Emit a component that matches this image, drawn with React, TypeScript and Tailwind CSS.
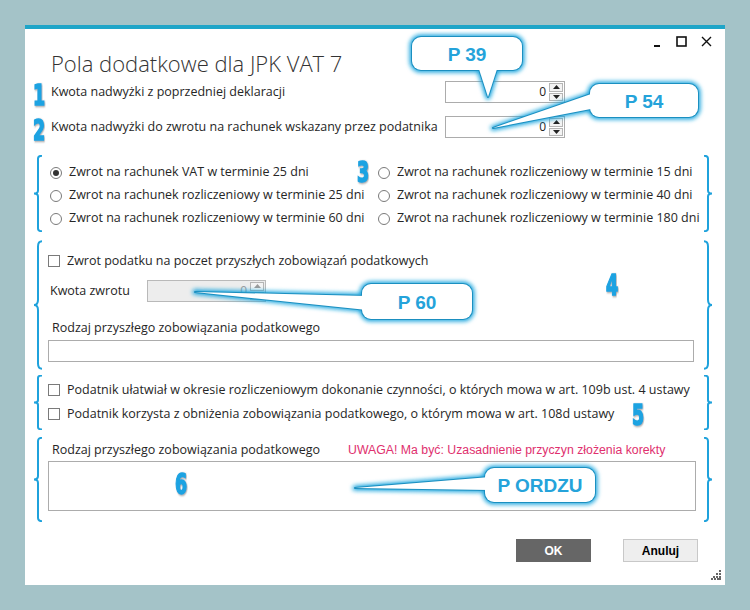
import type { ReactNode } from 'react';

const FONT = { fontFamily: '"Open Sans", "Noto Sans", sans-serif' };
const ARIAL = { fontFamily: '"Liberation Sans", Arial, sans-serif' };
const BLUE = '#1fa2dc';

function Brace({ side }: { side: 'left' | 'right' }) {
  // curly brace drawn to the full height of its group
  const d =
    side === 'left'
      ? 'M9 1 Q5 1 5 5 L5 46 Q5 50 1 50 Q5 50 5 54 L5 95 Q5 99 9 99'
      : 'M1 1 Q5 1 5 5 L5 46 Q5 50 9 50 Q5 50 5 54 L5 95 Q5 99 1 99';
  return (
    <svg
      className={`absolute top-0 h-full w-[10px] ${side === 'left' ? '-left-[15px]' : '-right-[17px]'}`}
      viewBox="0 0 10 100"
      preserveAspectRatio="none"
      aria-hidden="true"
    >
      <path d={d} fill="none" stroke={BLUE} strokeWidth="2" vectorEffect="non-scaling-stroke" />
    </svg>
  );
}

function Group({ children, className = '' }: { children: ReactNode; className?: string }) {
  return (
    <div className={`relative ${className}`}>
      <Brace side="left" />
      <Brace side="right" />
      {children}
    </div>
  );
}

function Spinner({ disabled }: { disabled?: boolean }) {
  const c = disabled ? '#9a9a9a' : '#222';
  return (
    <div className="flex flex-col h-full w-[15px] py-[1px] pr-[1px] gap-[1px]">
      {[0, 1].map((i) => (
        <div key={i} className="flex-1 border border-[#b5b5b5] bg-[#f3f3f3] flex items-center justify-center">
          <svg width="7" height="4" viewBox="0 0 7 4">
            <path d={i === 0 ? 'M0 4 L3.5 0 L7 4Z' : 'M0 0 L3.5 4 L7 0Z'} fill={c} />
          </svg>
        </div>
      ))}
    </div>
  );
}

function NumberBox({ disabled, className = '' }: { disabled?: boolean; className?: string }) {
  return (
    <div
      className={`flex items-stretch border ${disabled ? 'border-[#b9b9b9] bg-[#ededed] text-[#9a9a9a]' : 'border-[#acacac] bg-white text-[#222]'} ${className}`}
    >
      <div className="flex-1 flex items-center justify-end pr-[3px] text-[12px]">0</div>
      <Spinner disabled={disabled} />
    </div>
  );
}

function Radio({ checked, label }: { checked?: boolean; label: string }) {
  return (
    <div className="flex items-center h-[23px] gap-[7px] whitespace-nowrap">
      <span className="w-[12px] h-[12px] shrink-0 rounded-full border border-[#7a7a7a] flex items-center justify-center">
        {checked && <span className="w-[6px] h-[6px] rounded-full bg-[#333]" />}
      </span>
      <span>{label}</span>
    </div>
  );
}

function Check({ label, className = '' }: { label: string; className?: string }) {
  return (
    <div className={`flex items-center gap-[7px] whitespace-nowrap ${className}`}>
      <span className="w-[12px] h-[12px] shrink-0 border border-[#7a7a7a] bg-white" />
      <span>{label}</span>
    </div>
  );
}

const callouts = [
  { x: 412, y: 37, w: 110, h: 33, tail: '478,66 498,66 488,97', text: 'P 39' },
  { x: 590, y: 84, w: 108, h: 33, tail: '594,93 596,108 493,128', text: 'P 54' },
  { x: 362, y: 284, w: 110, h: 35, tail: '367,296 367,310 195,292', text: 'P 60' },
  { x: 485, y: 468, w: 110, h: 34, tail: '490,477 490,490 355,488', text: 'P ORDZU' },
];

const digits = [
  { t: '1', x: 33, y: 105 },
  { t: '2', x: 33, y: 140 },
  { t: '3', x: 357, y: 182 },
  { t: '4', x: 606, y: 295 },
  { t: '5', x: 632, y: 425 },
  { t: '6', x: 175, y: 494 },
];

function Annotations() {
  return (
    <svg className="absolute inset-0 pointer-events-none" width="750" height="610" aria-hidden="true">
      <defs>
        <filter id="glow" x="-20%" y="-40%" width="140%" height="180%">
          <feGaussianBlur stdDeviation="2" />
        </filter>
        <filter id="dshadow" x="-50%" y="-20%" width="200%" height="150%">
          <feDropShadow dx="1" dy="1" stdDeviation="1" floodColor="#555" floodOpacity="0.6" />
        </filter>
      </defs>
      {callouts.map((c) => (
        <g key={c.text}>
          <g filter="url(#glow)">
            <rect x={c.x} y={c.y} width={c.w} height={c.h} rx="9" fill="none" stroke="#14a3dd" strokeWidth="5" />
            <polygon points={c.tail} fill="none" stroke="#14a3dd" strokeWidth="5" strokeLinejoin="round" />
          </g>
          <rect x={c.x} y={c.y} width={c.w} height={c.h} rx="9" fill="none" stroke="#1b8fc0" strokeWidth="2" />
          <polygon points={c.tail} fill="none" stroke="#1b8fc0" strokeWidth="2" strokeLinejoin="round" />
          <rect x={c.x} y={c.y} width={c.w} height={c.h} rx="9" fill="#fff" />
          <polygon points={c.tail} fill="#fff" />
          <text
            x={c.x + c.w / 2}
            y={c.y + c.h / 2 + 7}
            textAnchor="middle"
            fontSize="19"
            fontWeight="bold"
            fill="#25a3da"
            style={ARIAL}
          >
            {c.text}
          </text>
        </g>
      ))}
      {digits.map((d) => (
        <text
          key={d.t}
          transform={`translate(${d.x} ${d.y}) scale(0.6 1)`}
          fontSize="29"
          fontWeight="bold"
          fill="#1ba3e2"
          stroke="#1ba3e2"
          strokeWidth="1.6"
          filter="url(#dshadow)"
          style={{ fontFamily: '"DejaVu Sans", sans-serif' }}
        >
          {d.t}
        </text>
      ))}
    </svg>
  );
}

export default function App() {
  return (
    <div className="relative w-[750px] h-[610px] bg-[#a4c3c8] pt-[25px] pl-[25px] text-[12.5px] text-[#262626]" style={FONT}>
      <div className="relative w-[700px] h-[560px] bg-white border-t-4 border-[#1fa5c8] flex flex-col pl-[23px] pr-[29px]">
        {/* window controls */}
        <div className="h-[19px] flex justify-end items-start pt-[7px] gap-[14px] -mr-[16px] text-[#111]">
          <svg width="10" height="12" viewBox="0 0 10 12"><rect x="2" y="9" width="6" height="2" fill="currentColor" /></svg>
          <svg width="11" height="11" viewBox="0 0 11 11"><rect x="1" y="1" width="9" height="9" fill="none" stroke="currentColor" strokeWidth="1.6" /></svg>
          <svg width="11" height="11" viewBox="0 0 11 11"><path d="M1 1 L10 10 M10 1 L1 10" stroke="currentColor" strokeWidth="1.4" /></svg>
        </div>

        <h1 className="h-[30px] leading-[30px] text-[22px] font-light text-[#333] pl-[3px]">Pola dodatkowe dla JPK VAT 7</h1>

        <div className="mt-[3px] h-[22px] flex items-center pl-[3px]">
          <span className="w-[394px]">Kwota nadwyżki z poprzedniej deklaracji</span>
          <NumberBox className="w-[120px] h-[22px]" />
        </div>
        <div className="mt-[13px] h-[22px] flex items-center pl-[3px]">
          <span className="w-[394px] whitespace-nowrap">Kwota nadwyżki do zwrotu na rachunek wskazany przez podatnika</span>
          <NumberBox className="w-[120px] h-[22px]" />
        </div>

        <Group className="mt-[17px] h-[77px] pt-[6px]">
          <div className="grid grid-cols-[328px_1fr] pl-[2px]">
            <div>
              <Radio checked label="Zwrot na rachunek VAT w terminie 25 dni" />
              <Radio label="Zwrot na rachunek rozliczeniowy w terminie 25 dni" />
              <Radio label="Zwrot na rachunek rozliczeniowy w terminie 60 dni" />
            </div>
            <div>
              <Radio label="Zwrot na rachunek rozliczeniowy w terminie 15 dni" />
              <Radio label="Zwrot na rachunek rozliczeniowy w terminie 40 dni" />
              <Radio label="Zwrot na rachunek rozliczeniowy w terminie 180 dni" />
            </div>
          </div>
        </Group>

        <Group className="mt-[8px] h-[130px] pt-[10px] flex flex-col">
          <Check className="h-[22px]" label="Zwrot podatku na poczet przyszłych zobowiązań podatkowych" />
          <div className="mt-[8px] h-[22px] flex items-center pl-[2px]">
            <span className="w-[97px]">Kwota zwrotu</span>
            <NumberBox disabled className="w-[119px] h-[22px]" />
          </div>
          <div className="mt-[16px] h-[20px] flex items-center pl-[4px]">Rodzaj przyszłego zobowiązania podatkowego</div>
          <div className="mt-[2px] h-[22px] border border-[#acacac] bg-white mr-[2px]" />
        </Group>

        <Group className="mt-[5px] h-[55px] pt-[3px] flex flex-col">
          <Check className="h-[24px]" label="Podatnik ułatwiał w okresie rozliczeniowym dokonanie czynności, o których mowa w art. 109b ust. 4 ustawy" />
          <Check className="h-[24px]" label="Podatnik korzysta z obniżenia zobowiązania podatkowego, o którym mowa w art. 108d ustawy" />
        </Group>

        <Group className="mt-[7px] h-[85px] pt-[3px] flex flex-col">
          <div className="h-[20px] flex items-center pl-[4px] whitespace-nowrap">
            <span className="w-[296px]">Rodzaj przyszłego zobowiązania podatkowego</span>
            <span className="text-[12.3px] text-[#e0306e]" style={ARIAL}>
              UWAGA! Ma być: Uzasadnienie przyczyn złożenia korekty
            </span>
          </div>
          <div className="mt-[1px] h-[50px] border border-[#acacac] bg-white" />
        </Group>

        <div className="mt-[17px] flex justify-end gap-[32px] -mr-[2px]" style={ARIAL}>
          <button className="w-[75px] h-[23px] bg-[#666] text-white text-[12px] font-bold">OK</button>
          <button className="w-[75px] h-[23px] bg-[#eeeeee] border border-[#c8c8c8] text-black text-[12px] font-bold">Anuluj</button>
        </div>

        {/* resize grip */}
        <svg className="absolute right-[4px] bottom-[5px]" width="10" height="10" viewBox="0 0 10 10" aria-hidden="true">
          {[
            [8, 0], [5, 3], [8, 3], [2, 6], [5, 6], [8, 6], [0, 8], [3, 8], [6, 8], [8, 8],
          ].map(([x, y], i) => (
            <rect key={i} x={x} y={y} width="2" height="2" fill="#666" />
          ))}
        </svg>
      </div>
      <Annotations />
    </div>
  );
}
